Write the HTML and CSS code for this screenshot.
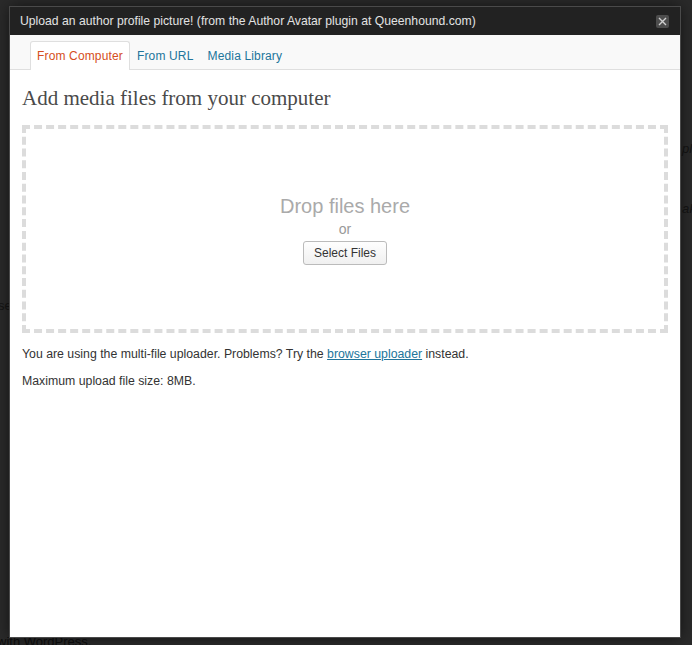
FILE: index.html
```html
<!DOCTYPE html>
<html>
<head>
<meta charset="utf-8">
<link rel="stylesheet" href="styles.css">
</head>
<body>
<div class="backdrop">
  <span class="ghost ghost-pla">pla</span>
  <span class="ghost ghost-ap">aP</span>
  <span class="ghost ghost-se">se</span>
  <span class="ghost ghost-wp">with WordPress.</span>
</div>
<div class="modal">
  <div class="modal-header">
    <div class="modal-title">Upload an author profile picture! (from the Author Avatar plugin at Queenhound.com)</div>
    <div class="modal-close">
      <svg width="9" height="9" viewBox="0 0 9 9"><path d="M1 1 L8 8 M8 1 L1 8" stroke="#d0d0d0" stroke-width="1.4"/></svg>
    </div>
  </div>
  <div class="tabs">
    <a class="tab tab-active">From Computer</a>
    <a class="tab">From URL</a>
    <a class="tab">Media Library</a>
  </div>
  <div class="content">
    <h3 class="heading">Add media files from your computer</h3>
    <div class="dropzone">
      <div class="drop-title">Drop files here</div>
      <div class="drop-or">or</div>
      <button class="select-btn">Select Files</button>
    </div>
    <p class="note first">You are using the multi-file uploader. Problems? Try the <a class="link">browser uploader</a> instead.</p>
    <p class="note">Maximum upload file size: 8MB.</p>
  </div>
</div>
</body>
</html>
```

FILE: styles.css
```css
html, body {
  margin: 0;
  padding: 0;
}
body {
  width: 692px;
  height: 645px;
  overflow: hidden;
  background: #2a2a2a;
  font-family: "Liberation Sans", Arial, sans-serif;
  position: relative;
}
.backdrop {
  position: absolute;
  inset: 0;
}
.ghost {
  position: absolute;
  color: #141414;
  font-size: 13px;
  font-style: italic;
}
.ghost-pla { left: 682px; top: 141px; }
.ghost-ap { left: 682px; top: 201px; }
.ghost-se { left: -2px; top: 298px; font-style: normal; }
.ghost-wp { left: -3px; top: 634px; font-style: normal; color: #0e0e0e; }

.modal {
  position: absolute;
  left: 10px;
  top: 7px;
  width: 670px;
  height: 630px;
  background: #fff;
  box-shadow: 0 0 0 1px #4a4a4a, 0 0 14px rgba(0,0,0,0.6);
  display: flex;
  flex-direction: column;
}
.modal-header {
  height: 28px;
  background: #222;
  display: flex;
  align-items: center;
  justify-content: space-between;
  padding: 0 11px 0 10px;
}
.modal-title {
  color: #e2e2e2;
  font-size: 12.2px;
}
.modal-close {
  width: 13px;
  height: 13px;
  background: #4d4d4d;
  border-radius: 2px;
  display: flex;
  align-items: center;
  justify-content: center;
}
.modal-close svg { display: block; }

.tabs {
  height: 35px;
  box-sizing: border-box;
  background: #f9f9f9;
  border-bottom: 1px solid #dfdfdf;
  display: flex;
  align-items: flex-end;
  padding-left: 20px;
}
.tab {
  height: 29px;
  box-sizing: border-box;
  padding: 0 6px;
  border: 1px solid transparent;
  border-bottom: none;
  border-radius: 3px 3px 0 0;
  color: #21759b;
  font-size: 12px;
  letter-spacing: 0.15px;
  line-height: 29px;
  margin-bottom: -1px;
}
.tab-active {
  background: #fff;
  border-color: #dfdfdf;
  color: #d54e21;
}

.content {
  padding: 0 12px;
}
.heading {
  margin: 0;
  padding-top: 17px;
  height: 38px;
  font-family: "Liberation Serif", Georgia, serif;
  font-weight: normal;
  font-size: 21px;
  line-height: 22px;
  color: #4a4a4a;
}
.dropzone {
  height: 208px;
  box-sizing: border-box;
  border: 4px dashed #dcdcdc;
  padding-top: 65px;
  text-align: center;
}
.drop-title {
  font-size: 20px;
  line-height: 25px;
  color: #aaa;
}
.drop-or {
  font-size: 14px;
  line-height: 20px;
  color: #999;
}
.select-btn {
  margin-top: 2px;
  height: 24px;
  padding: 0 10px;
  font-family: "Liberation Sans", Arial, sans-serif;
  font-size: 12px;
  color: #333;
  border: 1px solid #bbb;
  border-radius: 3px;
  background: linear-gradient(#fefefe, #f0f0f0);
}
.note {
  margin: 9px 0 0;
  font-size: 12.3px;
  line-height: 18px;
  color: #333;
}
.note.first { margin-top: 12px; }
.link {
  color: #21759b;
  text-decoration: underline;
}
```
